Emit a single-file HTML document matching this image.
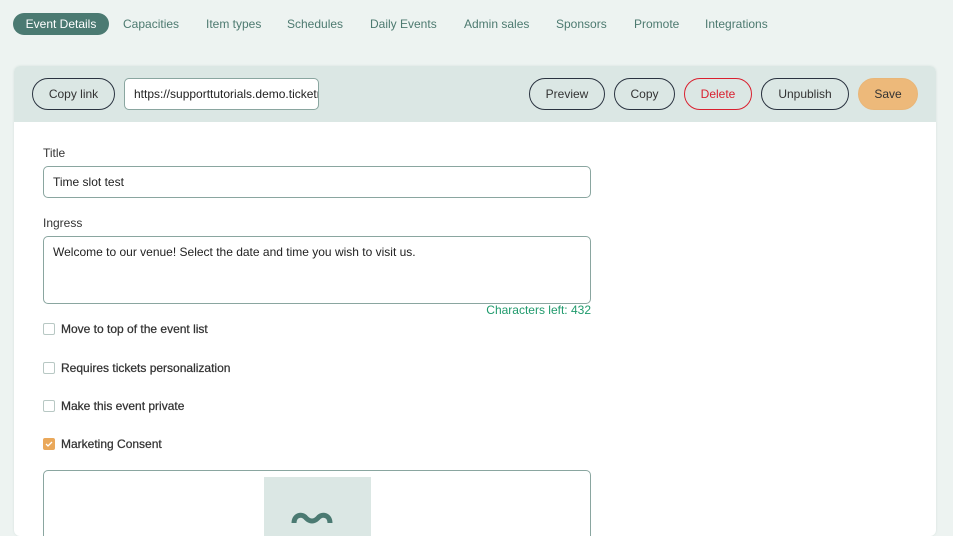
<!DOCTYPE html>
<html><head><style>
*{box-sizing:border-box}
body{margin:0;width:953px;height:517px;overflow:hidden;background:#edf3f1;font-family:"Liberation Sans",sans-serif;font-size:13px;color:#333}
.tab{position:absolute;top:13px;height:22px;line-height:22px;color:#4d7a70;font-size:12px;white-space:nowrap}
.tab.a{background:#4b7a72;color:#fff;border-radius:11px;width:96px;text-align:center}
.card{position:absolute;left:14px;top:66px;width:922px;height:470px;background:#fff;border-radius:6px;overflow:hidden;box-shadow:0 0 2px #d5e0dd}
.hd{height:56px;background:#dbe7e4;position:relative}
.btn{position:absolute;top:12px;height:32px;border:1px solid #2a3340;border-radius:16px;line-height:30px;text-align:center;color:#333;font-size:12px}
.url{position:absolute;left:110px;top:12px;width:195px;height:32px;background:#fff;border:1px solid #8aa6a0;border-radius:5px;line-height:30px;padding-left:9px;overflow:hidden;white-space:nowrap;font-size:12px;color:#222}
.lbl{position:absolute;left:29px;font-size:12px;color:#333}
.inp{position:absolute;left:29px;width:548px;border:1px solid #8aa6a0;border-radius:5px;padding-left:9px;color:#222;font-size:12px}
.cb{position:absolute;left:29px;width:12px;height:12px;border:1px solid #b8c8c4;border-radius:2px}
.cl{position:absolute;left:47px;font-size:12px;color:#333;-webkit-text-stroke:0.25px #333}
</style></head><body>
<div class="tab a" style="left:13px">Event Details</div>
<div class="tab" style="left:123px">Capacities</div>
<div class="tab" style="left:206px">Item types</div>
<div class="tab" style="left:287px">Schedules</div>
<div class="tab" style="left:370px">Daily Events</div>
<div class="tab" style="left:464px">Admin sales</div>
<div class="tab" style="left:556px">Sponsors</div>
<div class="tab" style="left:634px">Promote</div>
<div class="tab" style="left:705px">Integrations</div>
<div class="card">
<div class="hd">
<div class="btn" style="left:18px;width:83px">Copy link</div>
<div class="url">https://supporttutorials.demo.ticketmaster</div>
<div class="btn" style="left:515px;width:76px">Preview</div>
<div class="btn" style="left:600px;width:61px">Copy</div>
<div class="btn" style="left:670px;width:68px;border-color:#d9202f;color:#d9202f">Delete</div>
<div class="btn" style="left:747px;width:88px">Unpublish</div>
<div class="btn" style="left:844px;width:60px;background:#edb97a;border-color:#e9b678">Save</div>
</div>
<div class="lbl" style="top:80px">Title</div>
<div class="inp" style="top:100px;height:32px;line-height:30px">Time slot test</div>
<div class="lbl" style="top:150px">Ingress</div>
<div class="inp" style="top:170px;height:68px;padding-top:8px">Welcome to our venue! Select the date and time you wish to visit us.</div>
<div style="position:absolute;left:400px;width:177px;top:237px;text-align:right;color:#1f9a6c;font-size:12px">Characters left: 432</div>
<div class="cb" style="top:257px"></div><div class="cl" style="top:256px">Move to top of the event list</div>
<div class="cb" style="top:296px"></div><div class="cl" style="top:295px">Requires tickets personalization</div>
<div class="cb" style="top:334px"></div><div class="cl" style="top:333px">Make this event private</div>
<div class="cb" style="top:372px;background:#eaa85a;border-color:#eaa85a"><svg width="10" height="10" style="position:absolute;left:0;top:0"><path d="M2 5l2 2 4-4" stroke="#fff" stroke-width="1.3" fill="none"/></svg></div><div class="cl" style="top:371px">Marketing Consent</div>
<div style="position:absolute;left:29px;top:404px;width:548px;height:80px;border:1px solid #8aa6a0;border-radius:5px"></div>
<div style="position:absolute;left:250px;top:411px;width:107px;height:60px;background:#dbe7e4"><svg width="107" height="60"><path d="M30 46c0-8 8-10 12-5 4 4 8 4 12 0 4-5 12-3 12 5" stroke="#4b7a72" stroke-width="5" fill="none"/></svg></div>
</div>
</body></html>
